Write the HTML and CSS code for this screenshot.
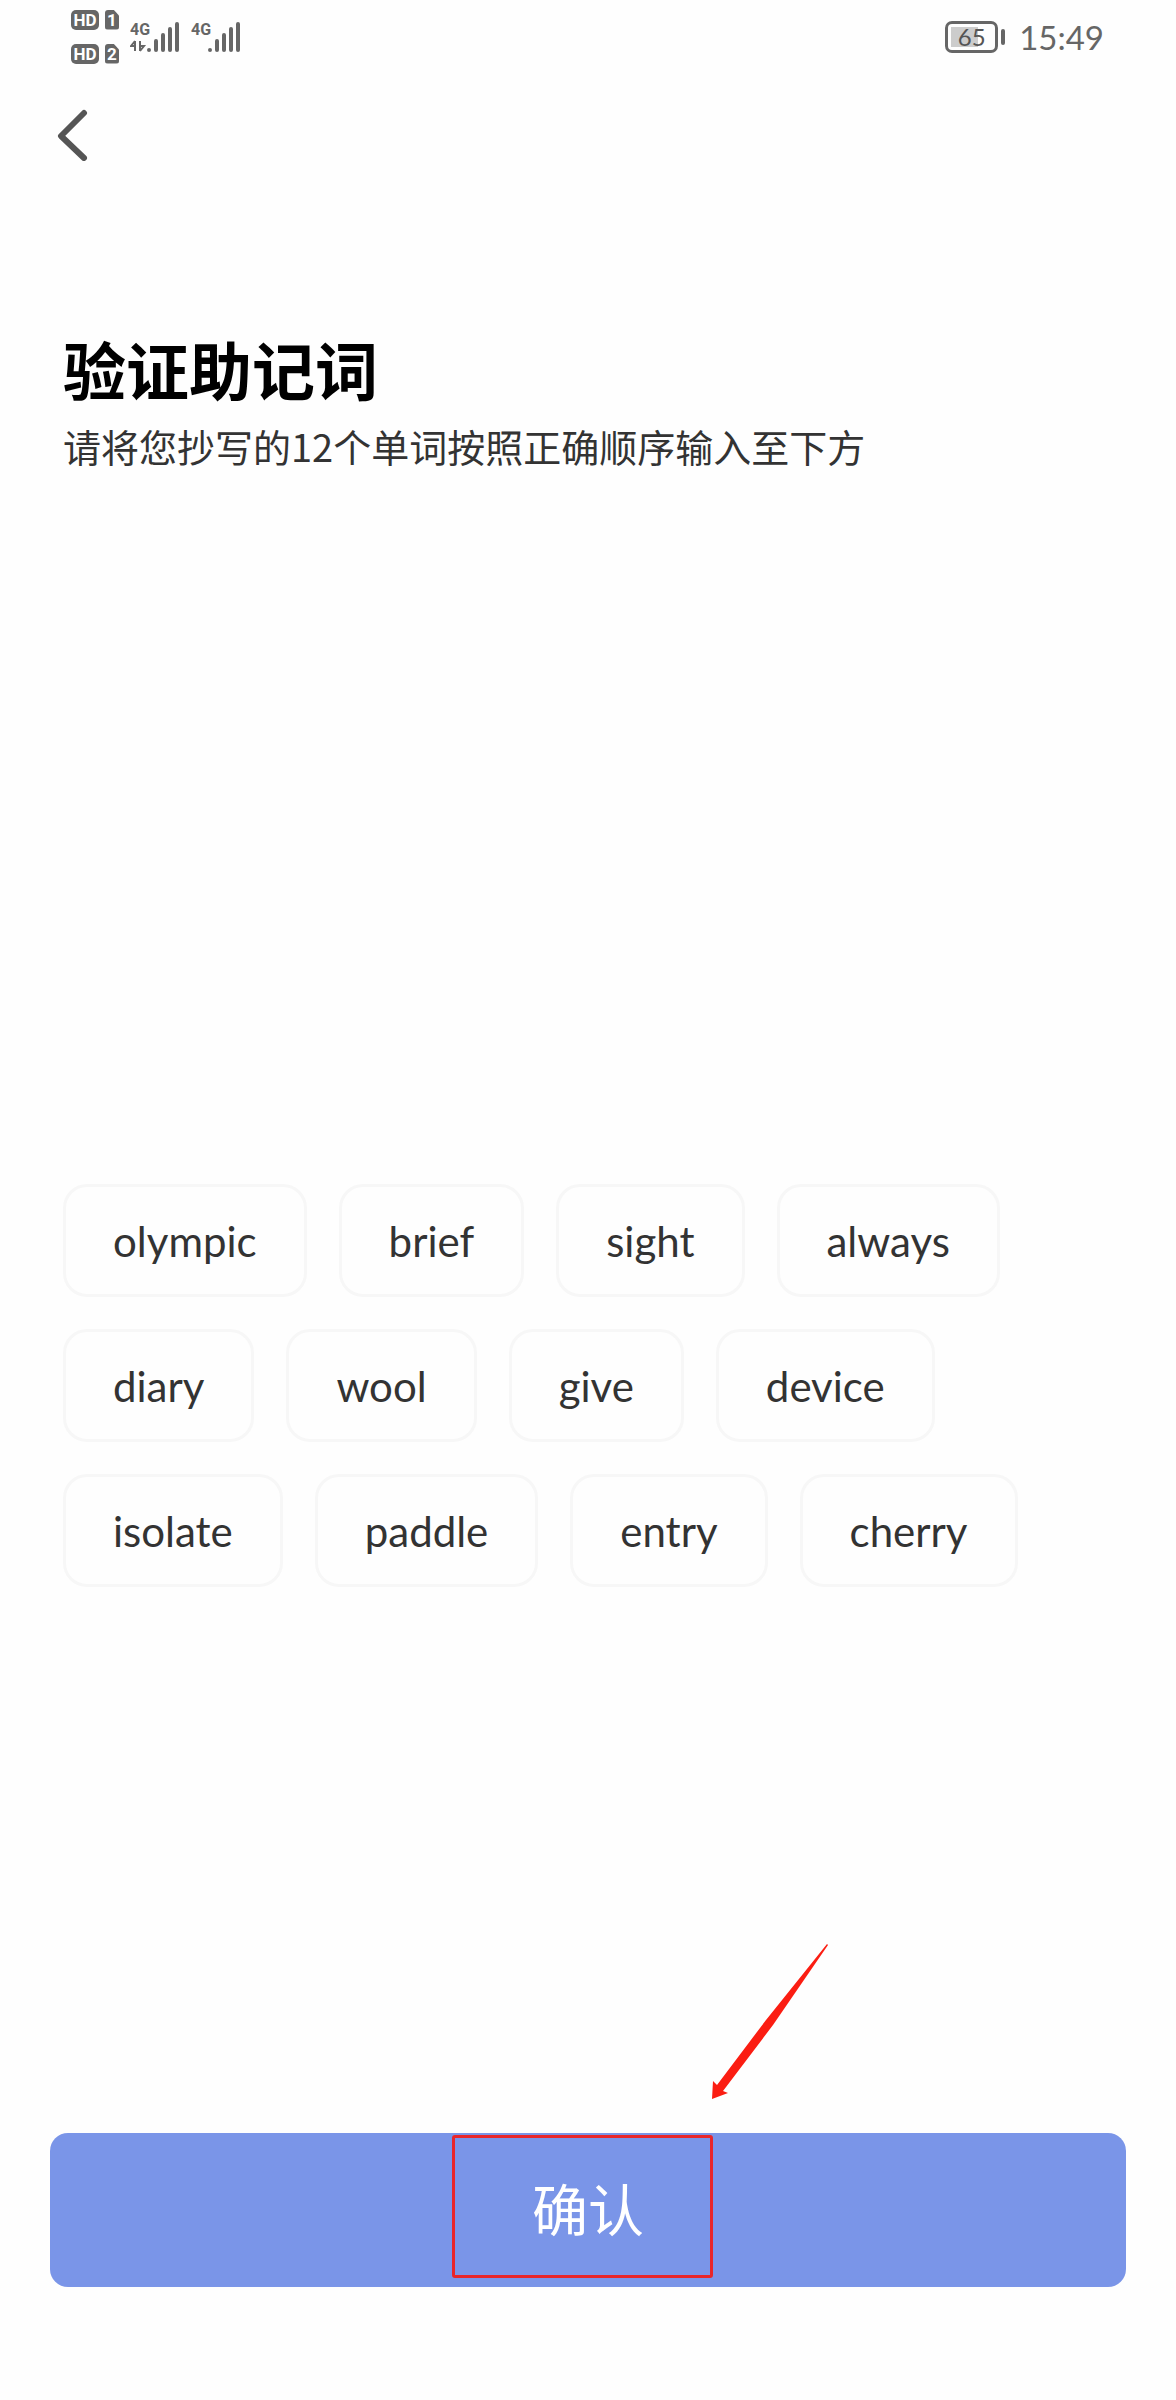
FILE: index.html
```html
<!DOCTYPE html>
<html lang="zh-CN">
<head>
<meta charset="utf-8">
<meta name="viewport" content="width=device-width, initial-scale=1">
<title>验证助记词</title>
<link rel="stylesheet" href="styles.css">
</head>
<body>
<div class="screen">
  <div class="status-bar">
    <div class="status-left">
      <div class="hd-stack">
        <div class="hd-row"><span class="hd">HD</span><span class="sim">1</span></div>
        <div class="hd-row"><span class="hd">HD</span><span class="sim">2</span></div>
      </div>
      <svg class="signal" width="50" height="32" viewBox="0 0 50 32" aria-hidden="true">
        <text x="0" y="14" class="net">4G</text>
        <path d="M5 20v10M5 20l-4 5h4M10 20v10M10 30l4-5h-4" fill="none" stroke="#666" stroke-width="2"/>
        <path d="M19 29v0M26 20v9M33 14v15M40 8v21M47 3v26" stroke="#666" stroke-width="4" stroke-linecap="round"/>
      </svg>
      <svg class="signal" width="50" height="32" viewBox="0 0 50 32" aria-hidden="true">
        <text x="0" y="14" class="net">4G</text>
        <path d="M19 29v0M26 20v9M33 14v15M40 8v21M47 3v26" stroke="#666" stroke-width="4" stroke-linecap="round"/>
      </svg>
    </div>
    <div class="status-right">
      <div class="battery"><span class="battery-body"><span class="battery-level">65</span></span><span class="battery-cap"></span></div>
      <time class="clock">15:49</time>
    </div>
  </div>
  <header class="nav">
    <button class="back" type="button" aria-label="返回">
      <svg width="32" height="52" viewBox="0 0 32 52" aria-hidden="true"><path d="M28 4L5 27L28 49" fill="none" stroke="#555" stroke-width="6" stroke-linecap="round" stroke-linejoin="round"/></svg>
    </button>
  </header>
  <main class="content">
    <h1 class="title">验证助记词</h1>
    <p class="subtitle">请将您抄写的12个单词按照正确顺序输入至下方</p>
    <div class="answer"></div>
    <div class="words">
      <div class="word-row"><button class="word" type="button">olympic</button><button class="word" type="button">brief</button><button class="word" type="button">sight</button><button class="word" type="button">always</button></div>
      <div class="word-row"><button class="word" type="button">diary</button><button class="word" type="button">wool</button><button class="word" type="button">give</button><button class="word" type="button">device</button></div>
      <div class="word-row"><button class="word" type="button">isolate</button><button class="word" type="button">paddle</button><button class="word" type="button">entry</button><button class="word" type="button">cherry</button></div>
    </div>
  </main>
  <footer class="footer">
    <button class="confirm" type="button">确认</button>
    <span class="marker"></span>
    <svg class="arrow" width="116" height="156" viewBox="0 0 116 156" aria-hidden="true"><path d="M115 0L116 1L61 81L11 147L16 149L0 155L1 137L5 141L54 76Z" fill="#fb1d12"/></svg>
  </footer>
</div>
</body>
</html>
```
FILE: styles.css
```css
* {
  box-sizing: border-box;
}

body {
  margin: 0;
  background: #fefefe;
  color: #333;
  font-family: Lato, "Noto Sans CJK SC", sans-serif;
}

button {
  font-family: inherit;
  cursor: pointer;
}

.screen {
  display: flex;
  flex-direction: column;
  min-height: 100vh;
}

.status-bar {
  display: flex;
  justify-content: space-between;
  align-items: center;
  height: 73px;
  padding: 0 72px 0 71px;
  color: #666;
}

.status-left,
.status-right,
.hd-row,
.battery {
  display: flex;
  align-items: center;
}

.status-left {
  gap: 11px;
}

.hd-stack {
  display: grid;
  gap: 14px;
}

.hd-row {
  gap: 6px;
}

.hd,
.sim {
  height: 20px;
  border-radius: 5px;
  background: #666;
  color: #fff;
  font: bold 17px/20px Roboto, sans-serif;
  text-align: center;
}

.hd {
  width: 28px;
}

.sim {
  width: 14px;
  border-radius: 3px;
  clip-path: polygon(0 0, 60% 0, 100% 30%, 100% 100%, 0 100%);
}

.net {
  fill: #666;
  font: bold 16px "Liberation Sans Narrow", Roboto, sans-serif;
}

.status-right {
  gap: 14px;
}

.battery {
  gap: 3px;
}

.battery-body {
  width: 53px;
  height: 32px;
  padding: 3px;
  border: 3px solid #666;
  border-radius: 7px;
}

.battery-level {
  display: block;
  height: 20px;
  background: linear-gradient(to right, #ccc 65%, transparent 65%);
  color: #555;
  font-size: 24px;
  line-height: 20px;
  text-align: center;
}

.battery-cap {
  width: 4px;
  height: 16px;
  border-radius: 2px;
  background: #666;
}

.clock {
  font-size: 33px;
  line-height: 40px;
}

.nav {
  padding: 36px 56px 0;
}

.back {
  display: block;
  padding: 0;
  border: 0;
  background: none;
}

.back svg {
  display: block;
}

.content {
  flex: 1;
  padding: 165px 63px 0;
}

.title {
  margin: 0;
  color: #000;
  font-size: 63px;
  font-weight: 700;
  line-height: 90px;
}

.subtitle {
  margin: 2px 0 0;
  font-family: "Noto Sans CJK SC", sans-serif;
  font-size: 38px;
  line-height: 56px;
}

.answer {
  min-height: 710px;
}

.words {
  display: grid;
  gap: 32px;
}

.word-row {
  display: flex;
  flex-wrap: wrap;
  gap: 32px;
}

.word {
  height: 113px;
  padding: 0 47px;
  border: 3px solid #f7f7f7;
  border-radius: 24px;
  background: #fefefe;
  color: #333;
  font-size: 42px;
  line-height: 56px;
}

.footer {
  position: relative;
  padding: 0 50px 113px;
}

.confirm {
  display: block;
  width: 100%;
  height: 154px;
  border: 0;
  border-radius: 18px;
  background: #7a95e8;
  color: #fff;
  font-size: 56px;
  line-height: 80px;
}

.marker {
  position: absolute;
  top: 2px;
  left: calc(50% - 136px);
  width: 261px;
  height: 143px;
  border: 3px solid #e8262a;
  border-radius: 3px;
  pointer-events: none;
}

.arrow {
  position: absolute;
  bottom: 100%;
  left: calc(50% + 124px);
  margin-bottom: 33px;
}
```
